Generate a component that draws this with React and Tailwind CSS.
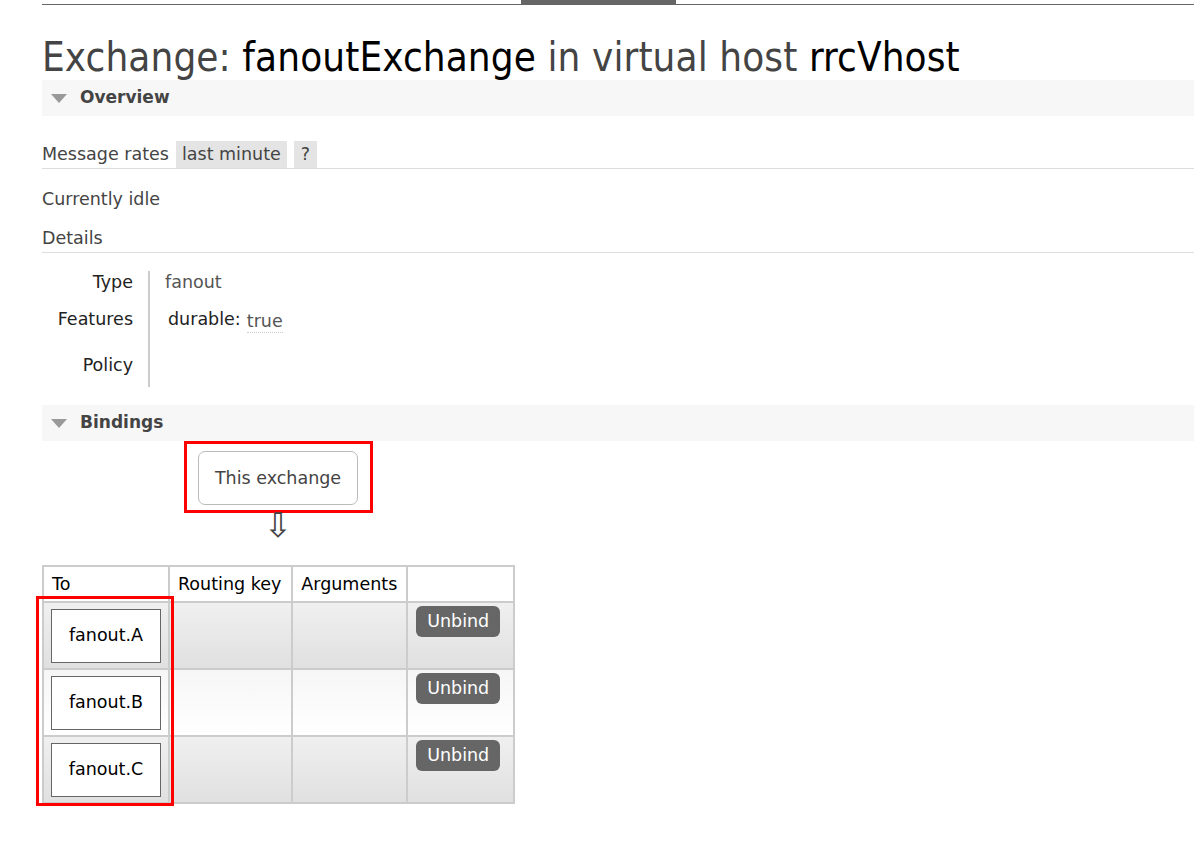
import React from 'react';

const body = { fontFamily: '"DejaVu Sans", Verdana, sans-serif' };
const heading = { fontFamily: '"DejaVu Sans Condensed", "Liberation Sans Narrow", "DejaVu Sans", sans-serif' };

const SectionBar = ({ title, className = '' }) => (
  <div className={`flex items-center bg-[#f7f7f7] h-[36px] pl-[9px] ${className}`}>
    <span className="w-0 h-0 border-l-[8px] border-r-[8px] border-t-[9px] border-l-transparent border-r-transparent border-t-[#999] mr-[13px]"></span>
    <span className="font-bold text-[17px] text-[#444]">{title}</span>
  </div>
);

const bindings = ['fanout.A', 'fanout.B', 'fanout.C'];

export default function App() {
  return (
    <div className="bg-white min-h-[848px] pl-[42px] text-[#444]" style={body}>
      <div className="border-b border-[#666] h-[5px]">
        <div className="ml-[479px] w-[155px] h-[4px] bg-[#666]"></div>
      </div>

      <h1 className="text-[40px] leading-[50px] mt-[27px] text-[#444] tracking-[0.1px]" style={heading}>
        Exchange: <span className="text-black">fanoutExchange</span> in virtual host <span className="text-black">rrcVhost</span>
      </h1>

      <SectionBar title="Overview" className="mt-[-2px] h-[35px]" />

      <div className="mt-[25px] flex items-center h-[28px] border-b border-[#ddd] text-[17.5px]">
        <span className="mr-[7px]">Message rates</span>
        <span className="bg-[#e4e4e4] px-[6px] h-[27px] leading-[27px] mr-[7px]">last minute</span>
        <span className="bg-[#e4e4e4] px-[7px] h-[27px] leading-[27px]">?</span>
      </div>

      <div className="text-[17.5px] mt-[19px] leading-[22px]">Currently idle</div>

      <div className="text-[17.5px] mt-[17px] leading-[22px] pb-[3px] border-b border-[#ddd]">Details</div>

      <div className="flex mt-[18px] text-[17.5px]">
        <div className="w-[108px] pr-[15px] text-right text-[#222] border-r-2 border-[#ccc]">
          <div className="h-[37px] leading-[22px]">Type</div>
          <div className="h-[46px] leading-[22px]">Features</div>
          <div className="h-[33px] leading-[22px]">Policy</div>
        </div>
        <div className="pl-[15px]">
          <div className="h-[37px] leading-[22px] text-[#555]">fanout</div>
          <div className="h-[46px] flex items-start pl-[3px]">
            <span className="text-[#222] leading-[22px]">durable:</span>
            <span className="ml-[6px] leading-[22px] mt-[2px] text-[#555] border-b border-dotted border-[#ccc]">true</span>
          </div>
        </div>
      </div>

      <SectionBar title="Bindings" className="mt-[18px]" />

      <div className="ml-[142px] w-[189px] border-[3px] border-[#f00] pt-[7px] pb-[5px] pl-[11px]">
        <div className="w-[160px] h-[54px] border border-[#bbb] rounded-[7px] flex items-center justify-center text-[17.5px] text-[#444]">
          This exchange
        </div>
      </div>
      <div className="ml-[221px] w-[30px] text-center text-[34px] leading-[30px] text-[#444] mt-[-3px]">⇩</div>

      <div className="relative mt-[25px] w-[473px]">
        <table className="border-collapse text-[17.5px] text-black">
          <thead>
            <tr className="h-[36px]">
              <th className="w-[126px] border-2 border-[#ccc] font-normal text-left pl-[8px]">To</th>
              <th className="w-[124px] border-2 border-[#ccc] font-normal text-left pl-[8px]">Routing key</th>
              <th className="w-[115px] border-2 border-[#ccc] font-normal text-left pl-[8px]">Arguments</th>
              <th className="w-[107px] border-2 border-[#ccc]"></th>
            </tr>
          </thead>
          <tbody>
            {bindings.map((name, i) => (
              <tr
                key={name}
                className={`h-[67px] ${i % 2 === 0 ? 'bg-gradient-to-b from-[#f0f0f0] to-[#e0e0e0]' : 'bg-gradient-to-b from-[#f6f6f6] to-[#ffffff]'}`}
              >
                <td className="border-2 border-[#ccc] px-[7px] py-[3px]">
                  <div className="w-[110px] h-[54px] bg-white border border-[#666] flex items-center justify-center">{name}</div>
                </td>
                <td className="border-2 border-[#ccc]"></td>
                <td className="border-2 border-[#ccc]"></td>
                <td className="border-2 border-[#ccc] align-top pt-[3px] pl-[8px]">
                  <button className="bg-[#666] text-white rounded-[6px] w-[84px] h-[31px] leading-[29px] text-[17.5px]">Unbind</button>
                </td>
              </tr>
            ))}
          </tbody>
        </table>
        <div className="absolute left-[-6px] top-[31px] w-[138px] h-[210px] border-[3px] border-[#f00] pointer-events-none"></div>
      </div>
    </div>
  );
}
